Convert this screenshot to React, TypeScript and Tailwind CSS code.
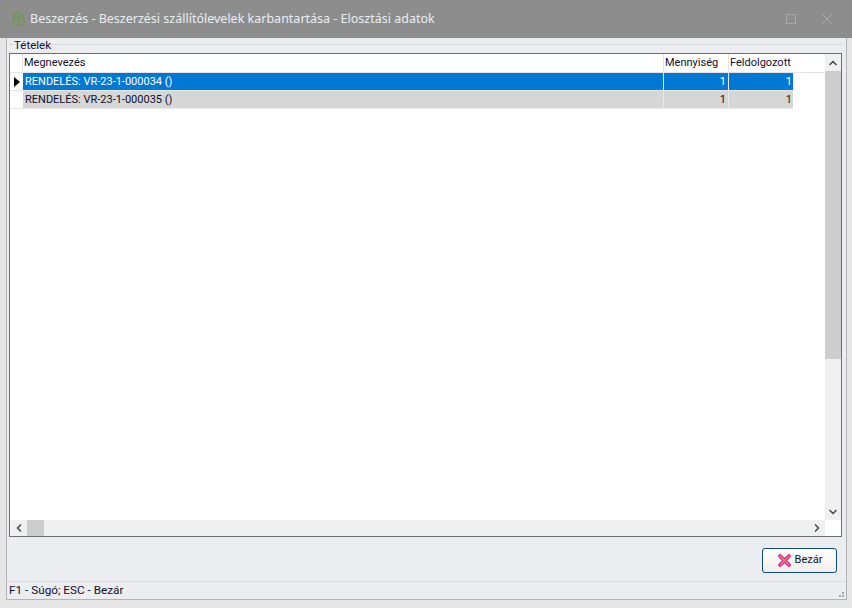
import { ChevronDown, ChevronLeft, ChevronRight, ChevronUp } from 'lucide-react';

const rows = [
  { name: 'RENDELÉS: VR-23-1-000034 ()', qty: 1, done: 1, selected: true },
  { name: 'RENDELÉS: VR-23-1-000035 ()', qty: 1, done: 1, selected: false },
];

function AppIcon() {
  return (
    <svg width="17" height="17" viewBox="0 0 17 17" fill="none" stroke="#6f9a55" strokeWidth="1.6">
      <path d="M8.5 2 13 4v3l1.5 4-3 3.500h-6l-3-3.500L4 7V4z" />
      <path d="M4 7l4.500 2L13 7M8.500 9v5.500M4 4l4.500 2L13 4" strokeWidth="1.2" />
    </svg>
  );
}

function CloseIcon() {
  return (
    <svg width="15" height="15" viewBox="0 0 15 15" className="shrink-0">
      <path d="M3 1.500 7.500 5.500 12 1.500 13.500 3 9.500 7.500l4 4.500-1.500 1.500-4.500-4-4.500 4L1.500 12l4-4.500-4-4.500z" fill="#e8663a" stroke="#d92bc0" strokeWidth="1.2" strokeLinejoin="round" />
      <path d="M3.500 3.500 7.500 7.500l4-4M3.500 11.500l4-4 4 4" fill="none" stroke="#f6a24c" strokeWidth="1" />
    </svg>
  );
}

export default function App() {
  return (
    <div className="w-[852px] h-[608px] flex flex-col bg-[#e6e6e6] font-['Roboto','Liberation_Sans',sans-serif] text-[11px] text-[#101030] overflow-hidden">
      {/* 標題列 */}
      <div className="h-[38px] shrink-0 bg-[#8d8d8d] flex items-center pl-[10px] text-[#e8edf2]">
        <AppIcon />
        <span className="ml-[3px] font-['Noto_Sans',sans-serif] text-[12.5px]">Beszerzés - Beszerzési szállítólevelek karbantartása - Elosztási adatok</span>
        <div className="ml-auto flex items-center gap-[25px] pr-[19px]">
          <div className="w-[10px] h-[10px] border border-[#a8a8a8]" />
          <svg width="12" height="12" viewBox="0 0 12 12" stroke="#a8a8a8" strokeWidth="1">
            <path d="M1 1l10 10M11 1 1 11" />
          </svg>
        </div>
      </div>

      <div className="flex-1 min-h-0 flex flex-col ml-[6px] mr-[5px] mb-[8px] bg-[#ecedf1] border-x border-b border-[#b4b4b4]">
        {/* Tételek */}
        <div className="flex-1 min-h-0 flex flex-col pt-[6px] pl-[2px] pr-[4px]">
          <div className="relative flex-1 min-h-0 flex flex-col border-t border-[#d6d6d6] pt-[8px]">
            <span className="absolute left-[4px] -top-[7px] bg-[#ecedf1] px-px text-[11.5px] leading-[14px] text-[#101030]">Tételek</span>
            <div className="h-[484px] shrink-0 flex flex-col bg-white border-t border-l border-[#6e6e6e] border-r border-b">
              <div className="flex-1 min-h-0 flex">
                <div className="flex-1 min-w-0 flex flex-col">
                  <div className="h-[19px] shrink-0 flex border-b border-[#e3e3e3] leading-[18px]">
                    <div className="w-[13px] shrink-0 border-r border-[#e3e3e3]" />
                    <div className="w-[641px] shrink-0 pl-px border-r border-[#e3e3e3]">Megnevezés</div>
                    <div className="w-[65px] shrink-0 pl-px border-r border-[#e3e3e3]">Mennyiség</div>
                    <div className="w-[64px] shrink-0 pl-px">Feldolgozott</div>
                  </div>
                  {rows.map((row) => (
                    <div key={row.name} className="h-[18px] shrink-0 flex leading-[17px]">
                      <div className="w-[13px] shrink-0 flex items-center justify-center border-b border-[#e3e3e3]">
                        {row.selected && <div className="w-0 h-0 border-y-[5px] border-y-transparent border-l-[6px] border-l-black" />}
                      </div>
                      <div className={`w-[641px] shrink-0 pl-[2px] border-r border-b border-[#e8e8e8] ${row.selected ? 'bg-[#0078d4] text-white' : 'bg-[#d6d6d6]'}`}>{row.name}</div>
                      <div className={`w-[65px] shrink-0 pr-[2px] text-right border-r border-b border-[#e8e8e8] ${row.selected ? 'bg-[#0078d4] text-white' : 'bg-[#d6d6d6]'}`}>{row.qty}</div>
                      <div className={`w-[64px] shrink-0 pr-px text-right border-b border-[#e8e8e8] ${row.selected ? 'bg-[#0078d4] text-white' : 'bg-[#d6d6d6]'}`}>{row.done}</div>
                    </div>
                  ))}
                </div>
                {/* 垂直捲軸 */}
                <div className="w-[16px] shrink-0 flex flex-col bg-[#f0f0f0]">
                  <div className="h-[17px] flex items-center justify-center"><ChevronUp size={12} strokeWidth={3.5} color="#505050" /></div>
                  <div className="h-[288px] bg-[#cdcdcd]" />
                  <div className="flex-1" />
                  <div className="h-[17px] flex items-center justify-center"><ChevronDown size={12} strokeWidth={3.5} color="#505050" /></div>
                </div>
              </div>
              {/* 水平捲軸 */}
              <div className="h-[16px] shrink-0 flex items-center bg-[#f0f0f0] mr-[16px]">
                <div className="w-[17px] flex justify-center"><ChevronLeft size={12} strokeWidth={3.5} color="#505050" /></div>
                <div className="w-[17px] h-full bg-[#cdcdcd]" />
                <div className="flex-1" />
                <div className="w-[17px] flex justify-center"><ChevronRight size={12} strokeWidth={3.5} color="#505050" /></div>
              </div>
            </div>
          </div>
        </div>

        {/* 按鈕列 */}
        <div className="h-[44px] shrink-0 flex items-center justify-end pr-[9px] pt-[2px]">
          <button className="w-[75px] h-[25px] flex items-center justify-center gap-[3px] rounded-[3px] border border-[#0f4a7c] bg-gradient-to-b from-white to-[#f0eeec] text-[11px] text-[#101030]">
            <CloseIcon />
            Bezár
          </button>
        </div>

        {/* 狀態列 */}
        <div className="h-[18px] shrink-0 relative flex items-center pl-[2px] border-t border-[#d9d9d9] text-[11.75px]">
          F1 - Súgó; ESC - Bezár
          <div className="absolute right-[2px] bottom-[2px] grid grid-cols-3 gap-px w-[8px]">
            <span />
            <span />
            <span className="w-[2px] h-[2px] bg-[#a8a8a8]" />
            <span />
            <span className="w-[2px] h-[2px] bg-[#a8a8a8]" />
            <span className="w-[2px] h-[2px] bg-[#a8a8a8]" />
          </div>
        </div>
      </div>
    </div>
  );
}
